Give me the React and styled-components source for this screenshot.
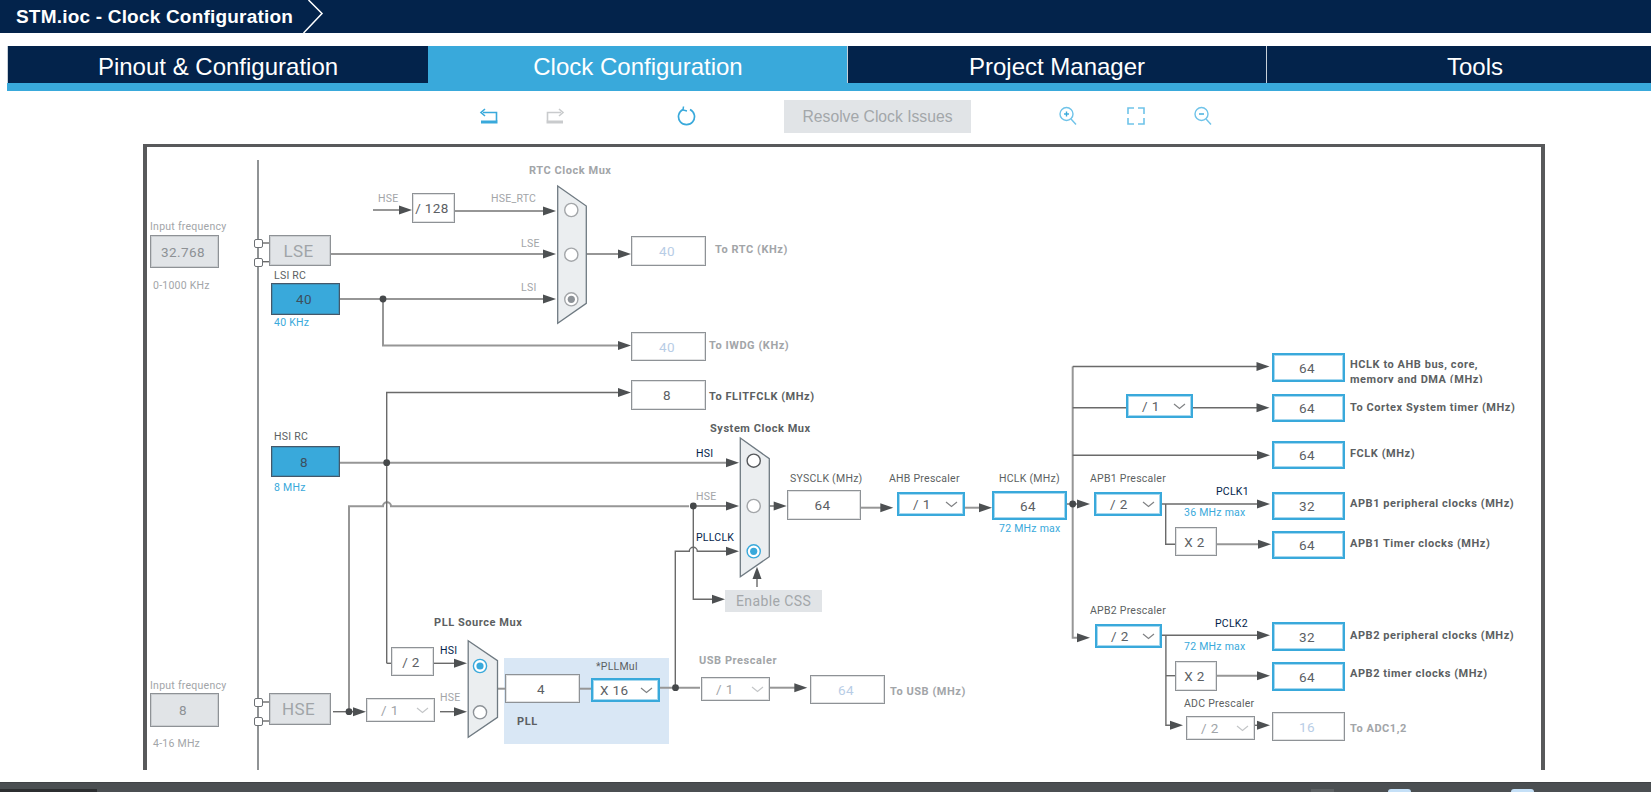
import React from 'react';
import styled, { createGlobalStyle } from 'styled-components';

// the diagram numbers below are page pixels, OX/OY is where the frame's inside starts
const OX = 147;
const OY = 147;

const NAVY = '#03234b';
const BLUE = '#39a9db';
const GREY_LINE = '#8e9296';

const GlobalStyle = createGlobalStyle`
  html, body {
    margin: 0;
    padding: 0;
    background: #fff;
  }
  body {
    width: 1651px;
    height: 792px;
    overflow: hidden;
    font-family: "Liberation Sans", Arial, sans-serif;
  }
`;

const Page = styled.div`
  width: 1651px;
  height: 792px;
  overflow: hidden;
  display: flex;
  flex-direction: column;
`;

const TitleBar = styled.div`
  height: 33px;
  flex: none;
  background: ${NAVY};
  display: flex;
  align-items: center;
  padding-left: 16px;
`;

const Title = styled.div`
  color: #fff;
  font-size: 19px;
  font-weight: bold;
  letter-spacing: 0.2px;
  white-space: nowrap;
`;

const Chevron = styled.svg`
  width: 22px;
  height: 33px;
  margin-left: 10px;
  flex: none;
`;

const TabBar = styled.div`
  flex: none;
  margin: 13px 0 0 7px;
  display: flex;
  height: 37px;
  border-bottom: 8px solid ${BLUE};
`;

const Tab = styled.div`
  flex: 0 0 ${(p) => p.$w}px;
  box-sizing: border-box;
  background: ${(p) => (p.$active ? BLUE : NAVY)};
  border-left: 1px solid ${(p) => (p.$active ? BLUE : '#c8d0d8')};
  color: #fff;
  font-size: 24px;
  line-height: 41px;
  text-align: center;
  white-space: nowrap;
`;

const Toolbar = styled.div`
  flex: none;
  height: 53px;
  display: flex;
  align-items: center;
  padding: 0 0 3px 478px;
  box-sizing: border-box;
`;

const ToolIcon = styled.svg`
  flex: none;
  width: 20px;
  height: 20px;
  margin-left: ${(p) => p.$gap || 0}px;
`;

const ResolveButton = styled.div`
  flex: none;
  margin-left: 87px;
  width: 187px;
  height: 33px;
  background: #e1e4e7;
  color: #a3a7aa;
  font-size: 15.7px;
  line-height: 33px;
  text-align: center;
`;

const Frame = styled.div`
  flex: none;
  position: relative;
  margin-left: 143px;
  width: 1402px;
  height: 626px;
  box-sizing: border-box;
  border-style: solid;
  border-color: #58595b;
  border-width: 3px 4px 0 4px;
  overflow: hidden;
`;

const Wires = styled.svg`
  position: absolute;
  left: 0;
  top: 0;
  width: 1394px;
  height: 623px;
`;

const placed = (p) => `
  left: ${p.$x - OX}px;
  top: ${p.$y - OY}px;
`;

// thin solid border plus a faint inner pixel, the reference's edges are soft
const edge = (active, line) => (active
  ? `border: 2px solid ${BLUE}; box-shadow: inset 0 0 0 1px rgba(57, 169, 219, 0.45);`
  : `border: 1px solid ${line}; box-shadow: inset 0 0 0 1px ${line}44;`);

const PllPanel = styled.div`
  position: absolute;
  ${placed}
  width: 165px;
  height: 86px;
  background: #d9e7f5;
`;

const ValueBox = styled.div`
  position: absolute;
  ${placed}
  width: ${(p) => p.$w}px;
  height: ${(p) => p.$h}px;
  box-sizing: border-box;
  display: flex;
  align-items: center;
  justify-content: center;
  padding-right: 3px;
  font-family: Roboto, "Liberation Sans", sans-serif;
  font-size: ${(p) => p.$size || 13.5}px;
  letter-spacing: 0.4px;
  background: ${(p) => p.$bg || '#fff'};
  color: ${(p) => p.$color || '#5c6064'};
  ${(p) => edge(p.$active, p.$line || GREY_LINE)}
`;

const Pin = styled.div`
  position: absolute;
  ${placed}
  width: 9px;
  height: 9px;
  box-sizing: border-box;
  background: #fff;
  border: 1.5px solid #6d7175;
  border-radius: 2px;
`;

const SelectBox = styled.div`
  position: absolute;
  ${placed}
  width: ${(p) => p.$w}px;
  height: 24px;
  box-sizing: border-box;
  display: flex;
  align-items: center;
  justify-content: space-between;
  padding: 0 5px 0 ${(p) => p.$pad || 14}px;
  background: #fff;
  font-family: Roboto, "Liberation Sans", sans-serif;
  font-size: 13.5px;
  letter-spacing: 0.4px;
  color: ${(p) => (p.$disabled ? '#a0a4a8' : '#5c6064')};
  ${(p) => edge(!p.$disabled, GREY_LINE)}
`;

const SelectCaret = styled.svg`
  flex: none;
  width: 13px;
  height: 7px;
`;

const Caption = styled.div`
  position: absolute;
  left: ${(p) => p.$x - OX}px;
  top: ${(p) => p.$y - OY - 6}px;
  line-height: 14px;
  font-family: Roboto, "Liberation Sans", sans-serif;
  font-size: ${(p) => (p.$bold ? 11 : 10.5)}px;
  letter-spacing: ${(p) => (p.$bold ? 0.55 : 0.25)}px;
  white-space: nowrap;
  font-weight: ${(p) => (p.$bold ? 700 : 400)};
  color: ${(p) => p.$color || '#66696c'};
`;

const ClippedCaption = styled(Caption)`
  white-space: pre-line;
  line-height: 15px;
  height: 26px;
  overflow: hidden;
`;

const EnableCss = styled.div`
  position: absolute;
  ${placed}
  width: 97px;
  height: 22px;
  background: #e1e4e7;
  color: #a3a7aa;
  font-family: Roboto, "Liberation Sans", sans-serif;
  font-size: 14px;
  letter-spacing: 0.4px;
  line-height: 22px;
  text-align: center;
`;

const StatusBar = styled.div`
  flex: none;
  margin-top: 12px;
  height: 10px;
  background: #4b4f52;
  border-top: 1px solid #404346;
  box-sizing: border-box;
  display: flex;
  align-items: flex-end;
`;

const StatusPiece = styled.div`
  flex: none;
  height: 3px;
  width: ${(p) => p.$w}px;
  margin-left: ${(p) => p.$gap || 0}px;
  background: ${(p) => p.$bg};
  border-radius: ${(p) => (p.$chip ? '3px 3px 0 0' : '0')};
`;

const GREY = '#a2a5a8';
const DARK = '#5c5f62';

// long light-weight runs
const thickWires = [
  'M331 254H546', 'M340 299H546', 'M383 299V345.5H622', 'M586 254H622', 'M455 211H546', 'M373 210H402',
  'M340 462.7H729', 'M349 711.7V506.3H383a4 4 0 0 1 8 0H689',
  'M769 506H776', 'M861 507.7H883', 'M965 507.7H982', 'M1067 504H1080',
  'M1072.7 366.5V637.7H1080', 'M497.5 688.7H505', 'M580 688.7H592', 'M660 687.7H700', 'M770 687.7H797',
  'M1217 544.3H1260', 'M1217 675.7H1260', 'M757 587V576',
];

const thinWires = [
  'M386.7 663.3V392.5H622', 'M386.7 663.3H391',
  'M693.3 506H729', 'M693.3 506V599.3H715', 'M675.3 687.7V551.3H689.3a4 4 0 0 1 8 0H729',
  'M1072.7 366.5H1259', 'M1072.7 407.7H1126', 'M1193 407.7H1259', 'M1072.7 455.3H1260',
  'M1162 504H1260', 'M1165.7 504V544.3H1175', 'M1162 635.3H1260', 'M1165.9 635V725.3H1173',
  'M1166 675.7H1175', 'M1255 725.3H1260',
  'M262 243H269', 'M262 261.7H269', 'M262 702H269', 'M262 721H269',
  'M333 711.7H356', 'M434 663.3H457', 'M440 711.7H457',
];

const arrows = [
  [412, 210], [556, 211], [556, 254], [556, 299], [631, 254], [631, 345.5], [631, 392.5],
  [739, 462.7], [739, 506], [739, 551.3], [725, 599.3], [786.7, 506], [893.3, 507.7], [992, 507.7],
  [1090, 504], [1090, 637.7], [1269.5, 366.5], [1269.5, 407.7], [1270, 455.3], [1270, 504],
  [1271, 544.3], [1270, 635.3], [1270, 675.7], [1183, 725.3], [1270, 725.3],
  [366, 711.7], [467, 663.3], [467, 711.7], [807.3, 687.7],
];

const dots = [
  [383, 299], [386.7, 462.7], [693.3, 506], [1072.7, 504], [349, 711.7], [675.5, 687.7],
];

const muxes = [
  { points: '557.7,186 586.3,206 586.3,303.3 557.7,323.3', line: '#6f7a82' },
  { points: '740.3,438 769.3,458.7 769.3,556.7 740.3,576.7', line: '#6f7a82' },
  { points: '468.2,640.7 497.5,660.7 497.5,717.3 468.2,737.3', line: '#6f7a82' },
];

const radios = [
  { x: 571.3, y: 210, line: '#a3a6a9' },
  { x: 571.3, y: 254.7, line: '#a3a6a9' },
  { x: 571.3, y: 299.3, line: '#a3a6a9', dot: '#8d9297' },
  { x: 753.7, y: 460.7, line: '#55585b' },
  { x: 753.7, y: 506, line: '#a3a6a9' },
  { x: 753.7, y: 551.3, line: BLUE, dot: BLUE },
  { x: 480, y: 666, line: BLUE, dot: BLUE },
  { x: 480, y: 712.3, line: '#8d9297' },
];

const boxes = [
  { x: 150, y: 235, w: 69, h: 33, text: '32.768', bg: '#e1e4e7', color: '#8d9195' },
  { x: 150, y: 693, w: 69, h: 34, text: '8', bg: '#e1e4e7', color: '#8d9195' },
  { x: 269, y: 235, w: 62, h: 31, text: 'LSE', bg: '#e1e4e7', color: '#a0a4a8', size: 17 },
  { x: 269, y: 693, w: 62, h: 32, text: 'HSE', bg: '#e1e4e7', color: '#a0a4a8', size: 17 },
  { x: 271, y: 283, w: 69, h: 32, text: '40', bg: BLUE, color: '#3d4f5e', line: '#44586a' },
  { x: 271, y: 446, w: 69, h: 31, text: '8', bg: BLUE, color: '#3d4f5e', line: '#44586a' },
  { x: 412, y: 193, w: 43, h: 30, text: '/ 128' },
  { x: 391, y: 647, w: 43, h: 29, text: '/ 2' },
  { x: 631, y: 236, w: 75, h: 30, text: '40', color: '#b8cde6' },
  { x: 631, y: 332, w: 75, h: 29, text: '40', color: '#b8cde6' },
  { x: 631, y: 380, w: 75, h: 30, text: '8' },
  { x: 505, y: 674, w: 75, h: 29, text: '4' },
  { x: 787, y: 490, w: 74, h: 30, text: '64' },
  { x: 810, y: 675, w: 75, h: 29, text: '64', color: '#b8cde6' },
  { x: 992, y: 491, w: 75, h: 29, text: '64', active: true },
  { x: 1272, y: 353, w: 73, h: 29, text: '64', active: true },
  { x: 1272, y: 394, w: 73, h: 28, text: '64', active: true },
  { x: 1272, y: 441, w: 73, h: 28, text: '64', active: true },
  { x: 1272, y: 492, w: 73, h: 28, text: '32', active: true },
  { x: 1272, y: 531, w: 73, h: 28, text: '64', active: true },
  { x: 1272, y: 622, w: 73, h: 29, text: '32', active: true },
  { x: 1272, y: 662, w: 73, h: 29, text: '64', active: true },
  { x: 1272, y: 712, w: 73, h: 29, text: '16', color: '#b8cde6' },
  { x: 1175, y: 527, w: 42, h: 29, text: 'X 2' },
  { x: 1175, y: 661, w: 42, h: 30, text: 'X 2' },
];

const selects = [
  { x: 366, y: 698, w: 69, text: '/ 1', disabled: true },
  { x: 591, y: 678, w: 69, text: 'X 16', pad: 7 },
  { x: 701, y: 677, w: 69, text: '/ 1', disabled: true },
  { x: 897, y: 492, w: 68, text: '/ 1' },
  { x: 1126, y: 394, w: 67, text: '/ 1' },
  { x: 1094, y: 492, w: 68, text: '/ 2' },
  { x: 1095, y: 624, w: 67, text: '/ 2' },
  { x: 1186, y: 716, w: 69, text: '/ 2', disabled: true },
];

const captions = [
  ['Input frequency', 150, 226, GREY],
  ['0-1000 KHz', 153, 285, GREY],
  ['Input frequency', 150, 685, GREY],
  ['4-16 MHz', 153, 743, GREY],
  ['LSI RC', 274, 275, DARK],
  ['40 KHz', 274, 322, BLUE],
  ['HSI RC', 274, 436, DARK],
  ['8 MHz', 274, 487, BLUE],
  ['HSE', 378, 198, GREY],
  ['HSE_RTC', 491, 198, GREY],
  ['LSE', 521, 243, GREY],
  ['LSI', 521, 287, GREY],
  ['RTC Clock Mux', 529, 170, GREY, true],
  ['To RTC (KHz)', 715, 249, GREY, true],
  ['To IWDG (KHz)', 709, 345, GREY, true],
  ['To FLITFCLK (MHz)', 709, 396, DARK, true],
  ['System Clock Mux', 710, 428, DARK, true],
  ['HSI', 696, 453, NAVY],
  ['HSE', 696, 496, GREY],
  ['PLLCLK', 696, 537, NAVY],
  ['SYSCLK (MHz)', 790, 478, DARK],
  ['AHB Prescaler', 889, 478, DARK],
  ['HCLK (MHz)', 999, 478, DARK],
  ['72 MHz max', 999, 528, BLUE],
  ['PLL Source Mux', 434, 622, DARK, true],
  ['HSI', 440, 650, NAVY],
  ['HSE', 440, 697, GREY],
  ['*PLLMul', 596, 666, DARK],
  ['PLL', 517, 721, DARK, true],
  ['USB Prescaler', 699, 660, GREY, true],
  ['To USB (MHz)', 890, 691, GREY, true],
  ['To Cortex System timer (MHz)', 1350, 407, DARK, true],
  ['FCLK (MHz)', 1350, 453, DARK, true],
  ['APB1 Prescaler', 1090, 478, DARK],
  ['PCLK1', 1216, 491, NAVY],
  ['36 MHz max', 1184, 512, BLUE],
  ['APB1 peripheral clocks (MHz)', 1350, 503, DARK, true],
  ['APB1 Timer clocks (MHz)', 1350, 543, DARK, true],
  ['APB2 Prescaler', 1090, 610, DARK],
  ['PCLK2', 1215, 623, NAVY],
  ['72 MHz max', 1184, 646, BLUE],
  ['APB2 peripheral clocks (MHz)', 1350, 635, DARK, true],
  ['APB2 timer clocks (MHz)', 1350, 673, DARK, true],
  ['ADC Prescaler', 1184, 703, DARK],
  ['To ADC1,2', 1350, 728, GREY, true],
];

function Caret({ disabled }) {
  return (
    <SelectCaret viewBox="0 0 13 7">
      <path d="M1 1L6.5 5.5L12 1" fill="none" stroke={disabled ? '#c4c6c8' : '#808284'} strokeWidth="1.2" />
    </SelectCaret>
  );
}

function UndoIcon({ color, flip, gap }) {
  return (
    <ToolIcon $gap={gap} viewBox="0 0 20 20">
      <g transform={flip ? 'translate(20 0) scale(-1 1)' : undefined} fill="none" stroke={color}>
        <path d="M5 6.5H18.5V15" strokeWidth="1.6" />
        <path d="M7 3L3 6.5L7 10" strokeWidth="1.6" />
        <path d="M3 16H19.5" strokeWidth="3" />
      </g>
    </ToolIcon>
  );
}

function MagnifierIcon({ gap, plus }) {
  return (
    <ToolIcon $gap={gap} viewBox="0 0 20 20">
      <g fill="none" stroke="#6fc3e9" strokeWidth="1.4">
        <circle cx="8.5" cy="8" r="6.5" />
        <path d="M13 13L18 18.5" />
        <path d="M6 8H11" stroke="#39a9db" />
        {plus && <path d="M8.5 5.5V10.5" stroke="#39a9db" />}
      </g>
    </ToolIcon>
  );
}

export default function App() {
  return (
    <Page>
      <GlobalStyle />
      <TitleBar>
        <Title>STM.ioc - Clock Configuration</Title>
        <Chevron viewBox="0 0 22 33">
          <path d="M5.5 0L19 13.5L0.5 33" fill="none" stroke="#fff" strokeWidth="1.5" />
        </Chevron>
      </TitleBar>

      <TabBar>
        <Tab $w={421}>Pinout &amp; Configuration</Tab>
        <Tab $w={419} $active>Clock Configuration</Tab>
        <Tab $w={419}>Project Manager</Tab>
        <Tab $w={417}>Tools</Tab>
      </TabBar>

      <Toolbar>
        <UndoIcon color={BLUE} />
        <UndoIcon color="#c9cbcd" flip gap={48} />
        <ToolIcon $gap={111} viewBox="0 0 20 20">
          <path d="M6 3.5A8 8 0 1 0 13 3.5" fill="none" stroke={BLUE} strokeWidth="1.7" />
          <path d="M6.5 0.5L6 4L10 5" fill="none" stroke={BLUE} strokeWidth="1.5" />
        </ToolIcon>
        <ResolveButton>Resolve Clock Issues</ResolveButton>
        <MagnifierIcon plus gap={87} />
        <ToolIcon $gap={48} viewBox="0 0 20 20">
          <path d="M8 2H2V8M12 2H18V8M8 18H2V12M12 18H18V12" fill="none" stroke="#6fc3e9" strokeWidth="1.6" />
        </ToolIcon>
        <MagnifierIcon gap={47} />
      </Toolbar>

      <Frame>
        <PllPanel $x={504} $y={658} />
        <Wires viewBox={`${OX} ${OY} 1394 623`}>
          <path d="M258 160V770" stroke="#6b6f72" strokeWidth="1.5" />
          {thickWires.map((d) => (
            <path key={d} d={d} fill="none" stroke="#969696" strokeWidth="2" />
          ))}
          {thinWires.map((d) => (
            <path key={d} d={d} fill="none" stroke="#6a6a6a" strokeWidth="1.4" />
          ))}
          {arrows.map(([x, y]) => (
            <polygon key={`${x}-${y}`} points={`${x - 13},${y - 4.5} ${x},${y} ${x - 13},${y + 4.5}`} fill="#4d5052" />
          ))}
          <polygon points="757,566.7 752.5,579 761.5,579" fill="#4d5052" />
          {dots.map(([x, y]) => (
            <circle key={`${x}-${y}`} cx={x} cy={y} r="3.4" fill="#45484a" />
          ))}
          {muxes.map((m) => (
            <polygon key={m.points} points={m.points} fill="#ebeef0" stroke={m.line} strokeWidth="1.3" />
          ))}
          {radios.map((r) => (
            <g key={`${r.x}-${r.y}`}>
              <circle cx={r.x} cy={r.y} r="6.6" fill="#fff" stroke={r.line} strokeWidth="1.4" />
              {r.dot && <circle cx={r.x} cy={r.y} r="3.6" fill={r.dot} />}
            </g>
          ))}
        </Wires>

        <Pin $x={254} $y={239} />
        <Pin $x={254} $y={258} />
        <Pin $x={254} $y={698} />
        <Pin $x={254} $y={717} />

        {boxes.map((b) => (
          <ValueBox
            key={`${b.x}-${b.y}`}
            $x={b.x}
            $y={b.y}
            $w={b.w}
            $h={b.h}
            $bg={b.bg}
            $color={b.color}
            $line={b.line}
            $size={b.size}
            $active={b.active}
          >
            {b.text}
          </ValueBox>
        ))}

        {selects.map((s) => (
          <SelectBox key={`${s.x}-${s.y}`} $x={s.x} $y={s.y} $w={s.w} $pad={s.pad} $disabled={s.disabled}>
            {s.text}
            <Caret disabled={s.disabled} />
          </SelectBox>
        ))}

        <EnableCss $x={725} $y={590}>Enable CSS</EnableCss>

        {captions.map(([text, x, y, color, bold]) => (
          <Caption key={`${text}-${x}-${y}`} $x={x} $y={y} $color={color} $bold={bold}>
            {text}
          </Caption>
        ))}
        <ClippedCaption $x={1350} $y={363} $color={DARK} $bold>
          {'HCLK to AHB bus, core,\nmemory and DMA (MHz)'}
        </ClippedCaption>
      </Frame>

      <StatusBar>
        <StatusPiece $w={97} $bg="#2c2e30" />
        <StatusPiece $gap={1214} $w={23} $bg="#5c6063" />
        <StatusPiece $gap={54} $w={23} $bg="#c5e0f7" $chip />
        <StatusPiece $gap={100} $w={23} $bg="#c5e0f7" $chip />
      </StatusBar>
    </Page>
  );
}
